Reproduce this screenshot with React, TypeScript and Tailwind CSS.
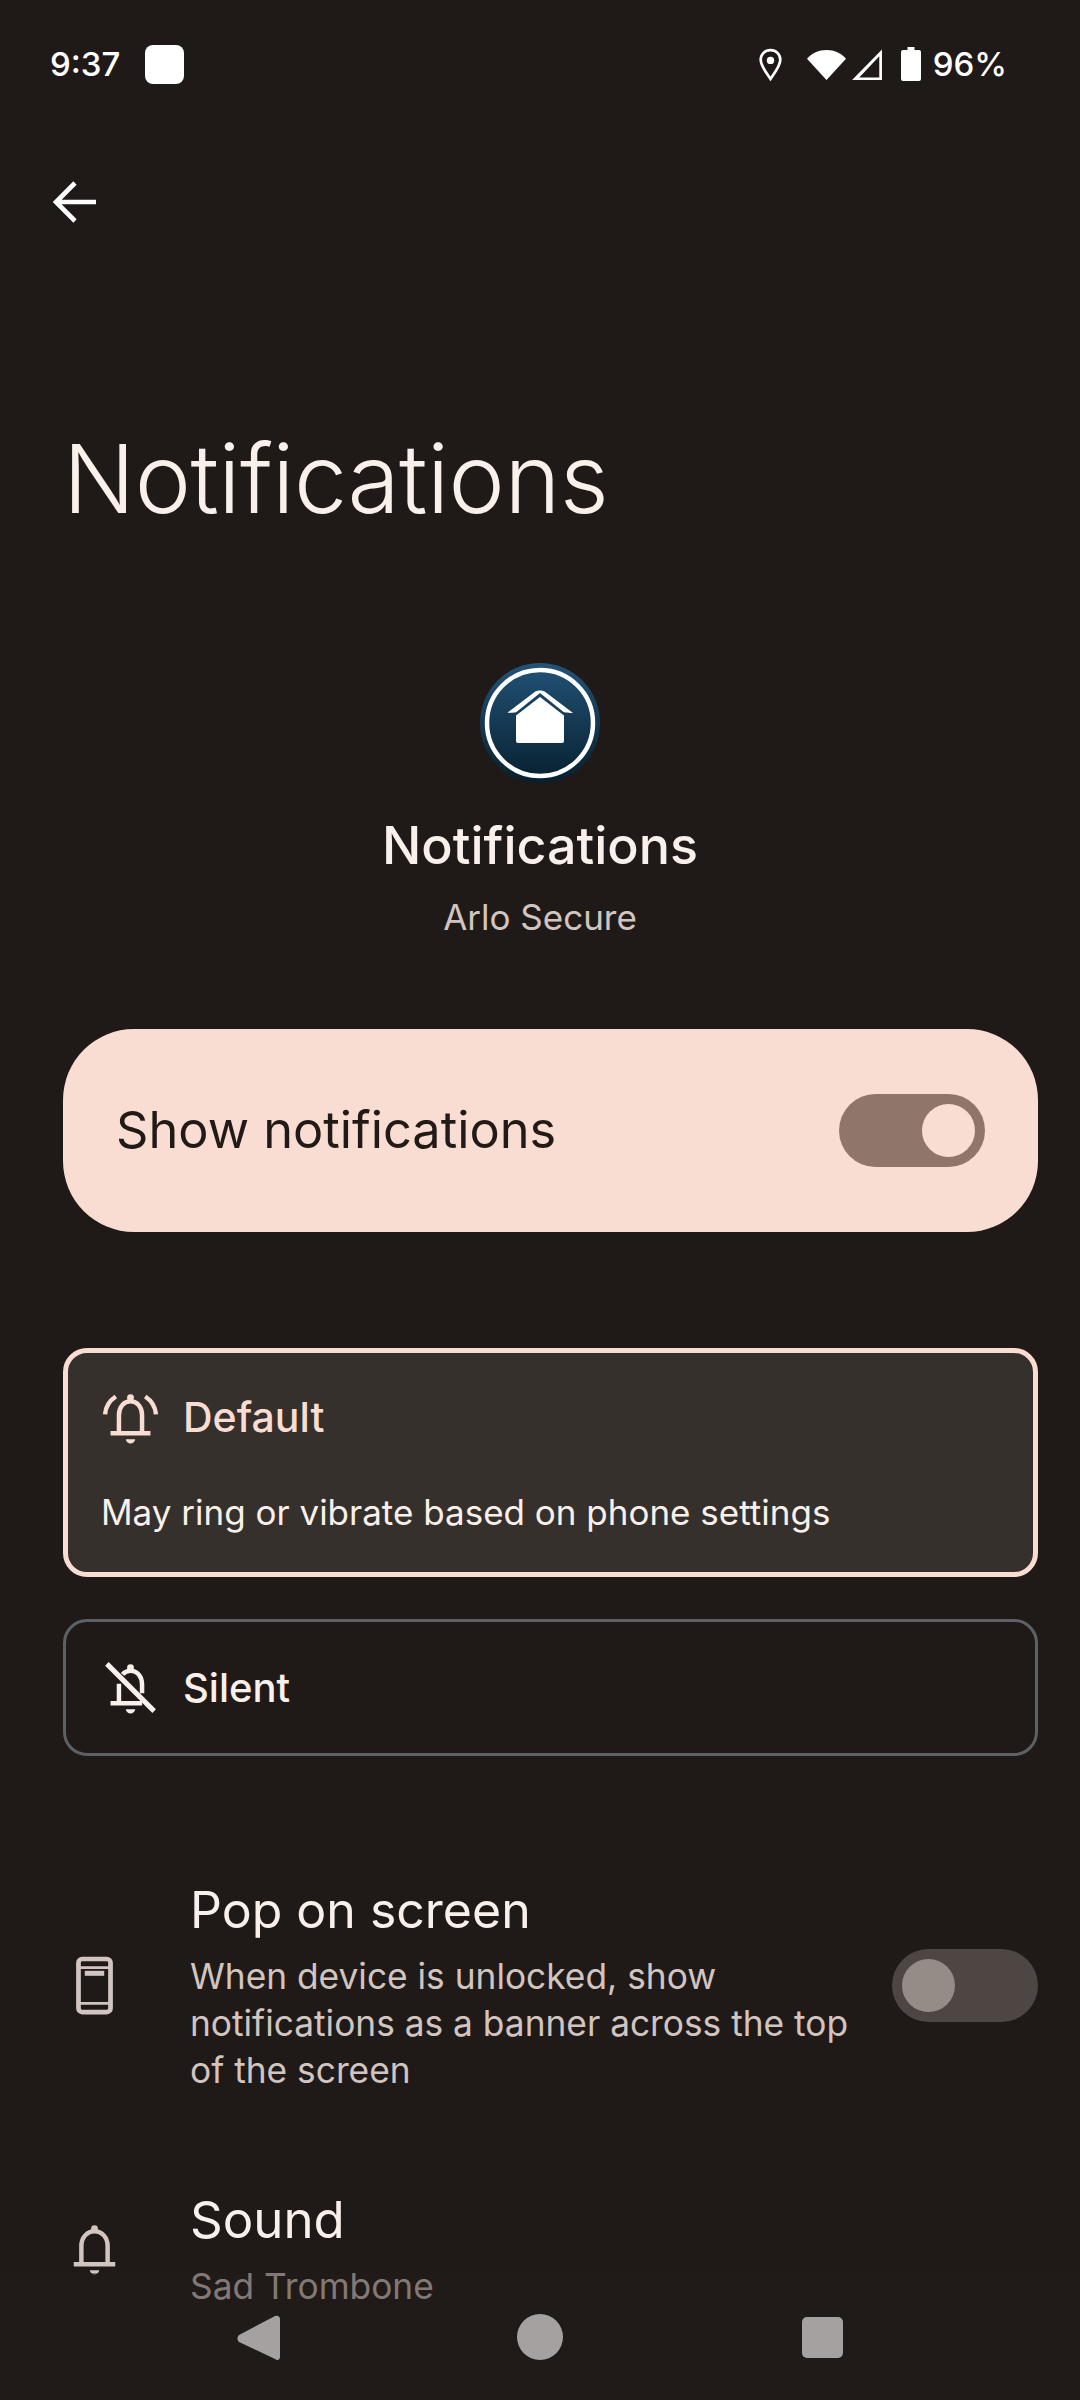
const INK = "#f9f0ec";
const SUB = "#d2c5c0";

function Bell({ className = "" }: { className?: string }) {
  return (
    <svg viewBox="0 0 24 24" className={className} fill="none" stroke="currentColor">
      <path d="M7 17.600V11c0-3.200 2.200-5.600 5-5.600s5 2.400 5 5.600v6.600" strokeWidth="1.700" />
      <path d="M4.100 18h15.800" strokeWidth="1.800" />
      <circle cx="12" cy="4.400" r="1.300" fill="currentColor" stroke="none" />
      <path d="M10.200 20.300h3.600c-.1 1-.9 1.600-1.800 1.600s-1.700-.6-1.800-1.600z" fill="currentColor" stroke="none" />
    </svg>
  );
}

function BellRing({ className = "" }: { className?: string }) {
  return (
    <svg viewBox="0 0 24 24" className={className} fill="none" stroke="currentColor">
      <path d="M7.600 17.600V11c0-3 1.900-5.200 4.400-5.200s4.400 2.200 4.400 5.200v6.600" strokeWidth="1.700" />
      <path d="M4.400 18h15.200" strokeWidth="1.800" />
      <circle cx="12" cy="4.400" r="1.300" fill="currentColor" stroke="none" />
      <path d="M10.200 20.300h3.600c-.1 1-.9 1.600-1.800 1.600s-1.700-.6-1.800-1.600z" fill="currentColor" stroke="none" />
      <path d="M6.400 4C4 5.600 2.500 7.900 2.300 10.800M17.600 4c2.400 1.600 3.900 3.900 4.100 6.800" strokeWidth="1.700" />
    </svg>
  );
}

function BellOff({ className = "" }: { className?: string }) {
  return (
    <svg viewBox="0 0 24 24" className={className} fill="none" stroke="currentColor">
      <path d="M9 7c.8-1 1.800-1.400 3-1.400 2.600 0 4.400 2.200 4.400 5.200v3.400M7.600 10.600v7" strokeWidth="1.700" />
      <path d="M4.400 18h12" strokeWidth="1.800" />
      <circle cx="12" cy="4.400" r="1.300" fill="currentColor" stroke="none" />
      <path d="M10.200 20.300h3.600c-.1 1-.9 1.600-1.800 1.600s-1.700-.6-1.800-1.600z" fill="currentColor" stroke="none" />
      <path d="M3 3l18 18" strokeWidth="1.900" />
    </svg>
  );
}

function PhoneBanner({ className = "" }: { className?: string }) {
  return (
    <svg viewBox="0 0 24 24" className={className} fill="none">
      <rect x="5.900" y="1.900" width="12.200" height="20.200" rx="1.400" stroke="currentColor" strokeWidth="1.800" />
      <path d="M6 5.200h12M6 18.800h12" stroke="currentColor" strokeWidth="1" />
      <rect x="8.300" y="6.400" width="7.400" height="1.900" fill="currentColor" />
    </svg>
  );
}

function AppLogo() {
  return (
    <svg viewBox="0 0 120 120" className="h-[120px] w-[120px]">
      <defs>
        <linearGradient id="logoFill" x1="0" y1="0" x2="0" y2="1">
          <stop offset="0" stopColor="#235276" />
          <stop offset="1" stopColor="#07202f" />
        </linearGradient>
      </defs>
      <circle cx="60" cy="60" r="60" fill="url(#logoFill)" />
      <circle cx="60" cy="60" r="53" fill="none" stroke="#ffffff" strokeWidth="4.500" />
      <path
        d="M60 30L36.500 49c-1.600.8-9.500 1-9.500 1l27-20.500c3.500-2.600 8.500-2.600 12 0L93 50s-7.900-.2-9.500-1z"
        fill="#ffffff"
      />
      <path d="M60 34L84 52.500V78a2 2 0 0 1-2 2H38a2 2 0 0 1-2-2V52.500z" fill="#ffffff" />
    </svg>
  );
}

function StatusIcons() {
  return (
    <div className="flex items-center">
      <svg viewBox="0 0 24 32" className="mr-[24px] h-[33px] w-[25px]">
        <path
          d="M12 2C6.600 2 2.500 6.200 2.500 11.500 2.500 17.500 8 24 12 30c4-6 9.500-12.500 9.500-18.500C21.500 6.200 17.400 2 12 2z"
          fill="none"
          stroke="#fff"
          strokeWidth="2.600"
        />
        <circle cx="12" cy="12" r="3.600" fill="#fff" />
      </svg>
      <svg viewBox="0 0 40 32" className="h-[33px] w-[39px]">
        <path d="M20 32L0 10C5 4 12 1 20 1s15 3 20 9z" fill="#fff" />
      </svg>
      <svg viewBox="0 0 32 32" className="ml-[4px] h-[33px] w-[33px]">
        <path d="M31 1.500V31H2z M28.400 8L9 28.600h19.400z" fill="#fff" fillRule="evenodd" />
      </svg>
      <svg viewBox="0 0 20 34" className="ml-[18px] h-[34px] w-[20px]">
        <path d="M6.500 0h7v3H18a2 2 0 0 1 2 2v27a2 2 0 0 1-2 2H2a2 2 0 0 1-2-2V5a2 2 0 0 1 2-2h4.500z" fill="#fff" />
      </svg>
      <span className="ml-[12px] text-[33px] leading-none font-medium text-white">96%</span>
    </div>
  );
}

export default function App() {
  return (
    <div
      className="relative h-[2400px] w-[1080px] overflow-hidden bg-[#1f1a18]"
      style={{ fontFamily: "Inter, 'Liberation Sans', sans-serif" }}
    >
      <div className="flex h-[128px] items-center justify-between pr-[73px] pl-[50px]">
        <div className="flex items-center">
          <span className="text-[33px] leading-none font-medium text-white">9:37</span>
          <div className="ml-[25px] h-[39px] w-[39px] rounded-[8px] bg-white" />
        </div>
        <StatusIcons />
      </div>

      <div className="flex h-[148px] items-center pl-[52px]">
        <svg viewBox="0 0 44 42" className="h-[42px] w-[44px]" fill="none" stroke="#fff" strokeWidth="4.600">
          <path d="M23 2L4 21l19 19M4 21h40" />
        </svg>
      </div>

      <h1 className="mt-[148px] pl-[63px] text-[95px] leading-[110px] font-light tracking-[-0.500px] text-[#f9f0ec]">
        Notifications
      </h1>

      <div className="mt-[129px] flex flex-col items-center">
        <AppLogo />
        <div className="mt-[32px] text-[52px] leading-[62px] font-medium" style={{ color: INK }}>
          Notifications
        </div>
        <div className="mt-[17px] text-[35px] leading-[46px]" style={{ color: SUB }}>
          Arlo Secure
        </div>
      </div>

      <div className="mt-[89px] mr-[42px] ml-[63px] flex h-[203px] items-center justify-between rounded-[71px] bg-[#f9ddd2] pr-[53px] pl-[53px]">
        <span className="text-[50.500px] leading-none text-[#221a16]">Show notifications</span>
        <div className="flex h-[73px] w-[146px] items-center justify-end rounded-full bg-[#90766a] pr-[10px]">
          <div className="h-[53px] w-[53px] rounded-full bg-[#f9ddd2]" />
        </div>
      </div>

      <div className="mt-[116px] mr-[42px] ml-[63px] h-[229px] rounded-[24px] border-[5px] border-[#f9ddd2] bg-[#36302c] pl-[33px]">
        <div className="flex h-[128px] items-center">
          <BellRing className="-ml-[2px] h-[63px] w-[63px] text-[#f9ddd2]" />
          <span className="ml-[21px] text-[41px] leading-none font-medium text-[#f9ddd2]">Default</span>
        </div>
        <div className="mt-[8px] text-[35px] leading-[46px]" style={{ color: INK }}>
          May ring or vibrate based on phone settings
        </div>
      </div>

      <div className="mt-[42px] mr-[42px] ml-[63px] flex h-[137px] items-center rounded-[24px] border-[3px] border-[#5d6164] pl-[35px]">
        <BellOff className="-ml-[2px] h-[63px] w-[63px] text-[#f9f0ec]" />
        <span className="ml-[21px] text-[40px] leading-none font-medium" style={{ color: INK }}>
          Silent
        </span>
      </div>

      <div className="mt-[121px] flex items-center pr-[42px] pl-[63px]">
        <PhoneBanner className="h-[63px] w-[63px] text-[#d2c5c0]" />
        <div className="ml-[64px] w-[680px]">
          <div className="text-[50px] leading-[66px]" style={{ color: INK }}>
            Pop on screen
          </div>
          <div className="mt-[10px] text-[35.300px] leading-[47px]" style={{ color: SUB }}>
            When device is unlocked, show notifications as a banner across the top of the screen
          </div>
        </div>
        <div className="ml-auto flex h-[73px] w-[146px] items-center rounded-full bg-[#4e4643] pl-[10px]">
          <div className="h-[53px] w-[53px] rounded-full bg-[#958c88]" />
        </div>
      </div>

      <div className="mt-[93px] flex items-center pl-[63px]">
        <Bell className="h-[63px] w-[63px] text-[#d2c5c0]" />
        <div className="ml-[64px]">
          <div className="text-[51px] leading-[66px]" style={{ color: INK }}>
            Sound
          </div>
          <div className="mt-[10px] text-[35.300px] leading-[47px]" style={{ color: SUB }}>
            Sad Trombone
          </div>
        </div>
      </div>

      <div className="absolute right-0 bottom-0 left-0 h-[127px] bg-[#211a18]/45">
        <svg viewBox="0 0 44 46" className="absolute top-[42px] left-[237px] h-[46px] w-[44px]">
          <path d="M38 1c3-1 5 .5 5 3v38c0 3-3 4-5 2L2 27c-2-2-2-5 0-7z" fill="#a4a1a0" />
        </svg>
        <div className="absolute top-[41px] left-[517px] h-[46px] w-[46px] rounded-full bg-[#a4a1a0]" />
        <div className="absolute top-[44px] left-[802px] h-[41px] w-[41px] rounded-[5px] bg-[#a4a1a0]" />
      </div>
    </div>
  );
}
